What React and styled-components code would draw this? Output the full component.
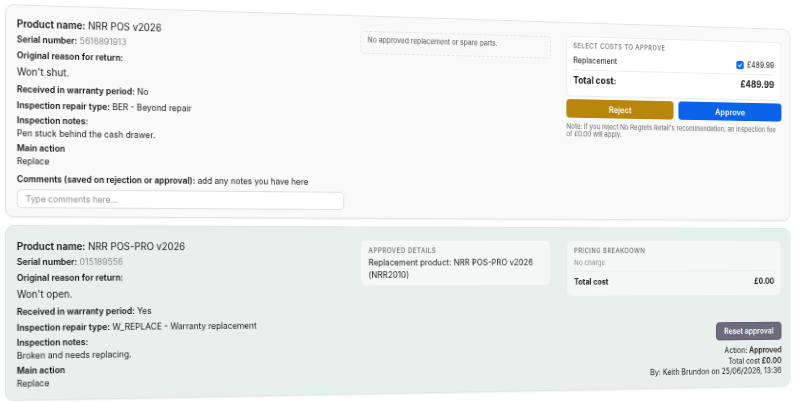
import React from "react";
import styled, { createGlobalStyle } from "styled-components";

const GlobalStyle = createGlobalStyle`
  html, body {
    margin: 0;
    padding: 0;
    background: #ffffff;
    overflow: hidden;
  }
  body {
    font-family: Inter, "Noto Sans", sans-serif;
    color: #1c1c1e;
  }
`;

// the whole board is tilted away to the right, like the screenshot
const Stage = styled.div`
  width: 886px;
  margin: 4px 0 0 5px;
  display: flex;
  flex-direction: column;
  gap: 8px;
  transform-origin: 0 251px;
  transform: perspective(1384px) rotateY(10deg);
`;

const Card = styled.section`
  display: grid;
  grid-template-columns: 348px 218px 1fr;
  column-gap: 18px;
  padding: ${(p) => (p.$approved ? "13px 10px 10px 11px" : "11px 10px 8px 11px")};
  border: 1px solid ${(p) => (p.$approved ? "#dde8e3" : "#e4e4e4")};
  border-radius: 9px;
  background: ${(p) => (p.$approved ? "#e7f0ed" : "#f9f9f9")};
  box-shadow: 0 1px 2px rgba(0, 0, 0, 0.06);
`;

const Column = styled.div`
  display: flex;
  flex-direction: column;
  min-width: 0;
  margin-top: ${(p) => p.$mt || 0}px;
`;

const Title = styled.div`
  font-size: 10px;
  line-height: 14px;
`;

const Line = styled.div`
  font-size: 8.8px;
  line-height: 13px;
  margin-top: ${(p) => p.$mt || 0}px;
`;

const Reason = styled.div`
  font-size: 10px;
  line-height: 16px;
  margin-top: 2px;
`;

const Label = styled.span`
  font-weight: 600;
  color: #111;
`;

const Serial = styled.span`
  color: #8c8c8c;
`;

const CommentInput = styled.input`
  box-sizing: border-box;
  width: 100%;
  height: 19px;
  margin-top: 4px;
  padding: 0 8px;
  border: 1px solid #dedede;
  border-radius: 5px;
  background: #fff;
  font-family: inherit;
  font-size: 8.8px;
  color: #1c1c1e;
  outline: none;

  &::placeholder {
    color: #8e8e8e;
  }
`;

const EmptyParts = styled.div`
  padding: 4px 7px 9px;
  border: 1px dashed #e3e3e3;
  border-radius: 5px;
  font-size: 7.6px;
  line-height: 9px;
  color: #555;
`;

const Panel = styled.div`
  box-sizing: border-box;
  padding: ${(p) => p.$pad || "6px 8px 5px"};
  border: 1px solid ${(p) => (p.$tint ? "#e8efec" : "#ececec")};
  border-radius: 6px;
  background: ${(p) => (p.$tint ? "#f3f8f6" : "#ffffff")};
`;

const Caption = styled.div`
  font-size: 7px;
  line-height: 10px;
  font-weight: 500;
  letter-spacing: 0.5px;
  text-transform: uppercase;
  color: #6b6b6b;
`;

const Row = styled.div`
  display: flex;
  justify-content: space-between;
  align-items: center;
  margin-top: ${(p) => p.$mt || 0}px;
  font-size: ${(p) => p.$size || 8.5}px;
  line-height: ${(p) => p.$lh || 12}px;
  font-weight: ${(p) => (p.$bold ? 700 : 400)};
`;

const Divider = styled.div`
  height: 1px;
  background: #ebebeb;
  margin-top: ${(p) => p.$mt || 4}px;
`;

const Price = styled.span`
  display: flex;
  align-items: center;
  gap: 4px;
`;

const Check = styled.span`
  display: inline-flex;
  align-items: center;
  justify-content: center;
  width: 9px;
  height: 9px;
  border-radius: 2px;
  background: #0b6cf0;
`;

const Buttons = styled.div`
  display: grid;
  grid-template-columns: 1fr 1fr;
  gap: 6px;
  margin-top: 3px;
`;

const Button = styled.button`
  height: 20px;
  border: none;
  border-radius: 4px;
  background: ${(p) => (p.$kind === "reject" ? "#b8860b" : "#0b63ea")};
  color: #fff;
  font-family: inherit;
  font-size: 9px;
  font-weight: 600;
  cursor: pointer;
`;

const Note = styled.div`
  margin-top: 6px;
  font-size: 7.35px;
  line-height: 8px;
  color: #666;
`;

const Details = styled.div`
  margin-top: 1px;
  font-size: 9px;
  line-height: 12.5px;
`;

const Muted = styled.div`
  margin-top: 1.5px;
  font-size: 7.5px;
  line-height: 11px;
  color: #888;
`;

const Footer = styled.div`
  margin-top: auto;
  display: flex;
  flex-direction: column;
  align-items: flex-end;
`;

const ResetButton = styled.button`
  height: 20px;
  padding: 0 9px;
  border: 1px solid #5b5b6b;
  border-radius: 4px;
  background: #6c6c7d;
  color: #fff;
  font-family: inherit;
  font-size: 8.5px;
  font-weight: 600;
  margin-bottom: 6px;
`;

const Summary = styled.div`
  font-size: 8.5px;
  line-height: 11.6px;
  text-align: right;

  b {
    font-weight: 600;
  }
`;

function ProductInfo({ name, serial, reason, warranty, repair, notes, action, children }) {
  return (
    <Column>
      <Title>
        <Label>Product name:</Label> {name}
      </Title>
      <Line $mt={2}>
        <Label>Serial number:</Label> <Serial>{serial}</Serial>
      </Line>
      <Line $mt={3}>
        <Label>Original reason for return:</Label>
      </Line>
      <Reason>{reason}</Reason>
      <Line $mt={3}>
        <Label>Received in warranty period:</Label> {warranty}
      </Line>
      <Line $mt={3}>
        <Label>Inspection repair type:</Label> {repair}
      </Line>
      <Line $mt={2}>
        <Label>Inspection notes:</Label>
      </Line>
      <Line>{notes}</Line>
      <Line $mt={2}>
        <Label>Main action</Label>
      </Line>
      <Line>{action}</Line>
      {children}
    </Column>
  );
}

export default function App() {
  return (
    <>
      <GlobalStyle />
      <Stage>
        <Card>
          <ProductInfo
            name="NRR POS v2026"
            serial="5616891913"
            reason="Won't shut."
            warranty="No"
            repair="BER - Beyond repair"
            notes="Pen stuck behind the cash drawer."
            action="Replace"
          >
            <Line $mt={5}>
              <Label>Comments (saved on rejection or approval):</Label> add any notes you have here
            </Line>
            <CommentInput placeholder="Type comments here..." />
          </ProductInfo>

          <Column $mt={4}>
            <EmptyParts>No approved replacement or spare parts.</EmptyParts>
          </Column>

          <Column $mt={3}>
            <Panel $pad="5px 8px 10px 7px">
              <Caption>Select costs to approve</Caption>
              <Row $mt={4}>
                <span>Replacement</span>
                <Price>
                  <Check>
                    <svg width="7" height="7" viewBox="0 0 12 12">
                      <path d="M2.5 6.5l2.5 2.5 4.5-5.5" fill="none" stroke="#fff" strokeWidth="2" strokeLinecap="round" strokeLinejoin="round" />
                    </svg>
                  </Check>
                  £489.99
                </Price>
              </Row>
              <Divider $mt={4} />
              <Row $mt={3} $size={10} $lh={14} $bold>
                <span>Total cost:</span>
                <span>£489.99</span>
              </Row>
            </Panel>
            <Buttons>
              <Button $kind="reject">Reject</Button>
              <Button $kind="approve">Approve</Button>
            </Buttons>
            <Note>
              Note: if you reject No Regrets Retail's recommendation, an inspection fee of £0.00 will apply.
            </Note>
          </Column>
        </Card>

        <Card $approved>
          <ProductInfo
            name="NRR POS-PRO v2026"
            serial="015189556"
            reason="Won't open."
            warranty="Yes"
            repair="W_REPLACE - Warranty replacement"
            notes="Broken and needs replacing."
            action="Replace"
          />

          <Column>
            <Panel $tint $pad="6px 8px 5px">
              <Caption>Approved details</Caption>
              <Details>Replacement product: NRR POS-PRO v2026 (NRR2010)</Details>
            </Panel>
          </Column>

          <Column>
            <Panel $tint $pad="6px 8px 8px">
              <Caption>Pricing breakdown</Caption>
              <Muted>No charge</Muted>
              <Divider $mt={3} />
              <Row $mt={5} $size={8.5} $lh={13} $bold>
                <span>Total cost</span>
                <span>£0.00</span>
              </Row>
            </Panel>
            <Footer>
              <ResetButton>Reset approval</ResetButton>
              <Summary>
                Action: <b>Approved</b>
                <br />
                Total cost <b>£0.00</b>
                <br />
                By: Keith Brundon on 25/06/2026, 13:36
              </Summary>
            </Footer>
          </Column>
        </Card>
      </Stage>
    </>
  );
}
